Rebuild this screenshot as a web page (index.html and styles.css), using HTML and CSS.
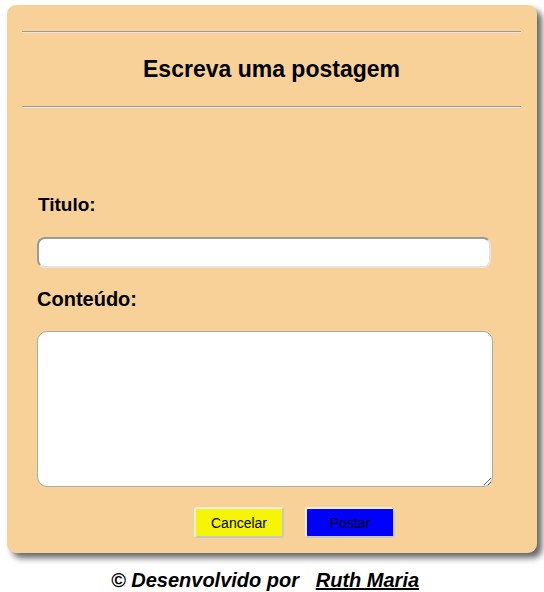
FILE: index.html
```html
<!DOCTYPE html>
<html lang="pt">
<head>
<meta charset="utf-8">
<title>Escreva uma postagem</title>
<link rel="stylesheet" href="styles.css">
</head>
<body>
<main class="card">
  <hr class="rule">
  <h1 class="title">Escreva uma postagem</h1>
  <hr class="rule">
  <form class="form">
    <label class="label label-small" for="titulo">Titulo:</label>
    <input class="field" id="titulo" type="text">
    <label class="label label-big" for="conteudo">Conteúdo:</label>
    <textarea class="area" id="conteudo"></textarea>
    <div class="actions">
      <button type="button" class="btn btn-cancel">Cancelar</button>
      <button type="button" class="btn btn-post">Postar</button>
    </div>
  </form>
</main>
<footer class="footer">© Desenvolvido por &nbsp;&nbsp;<a class="author" href="#">Ruth Maria</a></footer>
</body>
</html>
```
FILE: styles.css
```css
* { box-sizing: border-box; }
html, body { margin: 0; padding: 0; background: #ffffff; }
body {
  font-family: "Liberation Sans", Arial, sans-serif;
  color: #000;
  width: 544px;
  height: 592px;
  overflow: hidden;
}
.card {
  margin: 5px 0 0 7px;
  width: 530px;
  height: 548px;
  background: #f7d197;
  border-radius: 9px;
  box-shadow: 5px 5px 6px rgba(0,0,0,0.6);
  padding: 26px 16px 0 15px;
  display: flex;
  flex-direction: column;
}
.rule {
  margin: 0;
  height: 2px;
  border: none;
  border-top: 1px solid #9c9c9c;
  border-bottom: 1px solid #e6e6e6;
}
.title {
  margin: 0;
  height: 73px;
  font-size: 23px;
  font-weight: bold;
  text-align: center;
  line-height: 73px;
}
.form {
  display: flex;
  flex-direction: column;
  align-items: flex-start;
  padding-left: 15px;
}
.label { font-weight: bold; display: block; }
.label-small {
  font-size: 19px;
  margin: 86px 0 0 1px;
  line-height: 22px;
}
.field {
  margin-top: 21px;
  width: 454px;
  height: 31px;
  border-style: solid;
  border-width: 2px;
  border-color: #9a9a9a #e4e4e4 #e4e4e4 #9a9a9a;
  border-radius: 8px;
  background: #fff;
}
.label-big {
  font-size: 20px;
  margin-top: 19px;
  line-height: 24px;
}
.area {
  margin-top: 20px;
  width: 456px;
  height: 156px;
  border: 1px solid #aaaaaa;
  border-radius: 10px;
  background: #fff;
  resize: both;
}
.actions {
  align-self: stretch;
  display: flex;
  gap: 21px;
  padding-left: 157px;
  margin-top: 20px;
}
.btn {
  width: 90px;
  height: 31px;
  font-family: "Liberation Sans", Arial, sans-serif;
  font-size: 14px;
  color: #000;
  border-style: solid;
  border-width: 2px;
  border-color: #ececec #c8c8c8 #c8c8c8 #ececec;
  border-radius: 3px;
  padding: 0;
}
.btn-cancel { background: #f5f505; }
.btn-post { background: #0000ff; }
.footer {
  margin-top: 15px;
  text-align: center;
  font-size: 20px;
  font-weight: bold;
  font-style: italic;
  line-height: 24px;
  padding-right: 14px;
}
.author { color: #000; text-decoration: underline; }
```
